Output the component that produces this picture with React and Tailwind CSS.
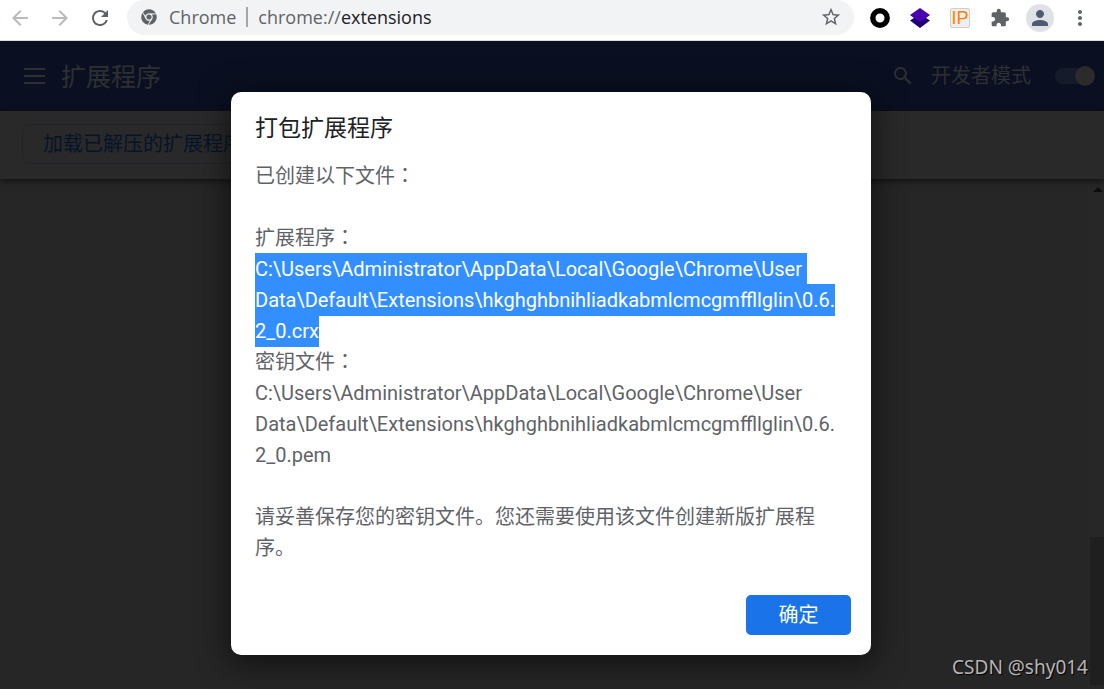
import { useState } from 'react';
import {
  MdArrowBack,
  MdArrowForward,
  MdRefresh,
  MdStarBorder,
  MdExtension,
  MdPerson,
  MdMoreVert,
  MdSearch,
} from 'react-icons/md';
import { FaChrome } from 'react-icons/fa';

const BASE_PATH = 'C:\\Users\\Administrator\\AppData\\Local\\Google\\Chrome\\User Data\\Default\\Extensions\\hkghghbnihliadkabmlcmcgmffllglin\\0.6.2_0';

function BrowserBar() {
  const [url, setUrl] = useState('extensions');

  return (
    <header className="flex h-[41px] items-start border-b border-[#dadce0] bg-white pr-[14px] pl-2 font-['Open_Sans','Noto_Sans_CJK_SC',sans-serif] text-[#5f6368]">
      <nav className="flex h-[35px] items-center gap-4">
        <button aria-label="Back" className="text-[#b8babd]">
          <MdArrowBack className="size-6" />
        </button>
        <button aria-label="Forward" className="text-[#b8babd]">
          <MdArrowForward className="size-6" />
        </button>
        <button aria-label="Reload">
          <MdRefresh className="size-6" />
        </button>
      </nav>

      <div className="ml-[15px] flex h-[35px] min-w-0 flex-1 items-center rounded-full bg-[#f1f3f4] pr-3 pb-0.5 pl-[14px] text-lg">
        <FaChrome className="size-4 shrink-0" />
        <span className="ml-3">Chrome</span>
        <span className="mx-[10px] h-5 w-0.5 shrink-0 bg-[#a3a7ab]" />
        <label htmlFor="url">chrome://</label>
        <input
          id="url"
          value={url}
          onChange={(e) => setUrl(e.target.value)}
          className="min-w-0 flex-1 bg-transparent text-[#202124] outline-none"
        />
        <button aria-label="Bookmark this tab">
          <MdStarBorder className="size-[22px]" />
        </button>
      </div>

      <div className="ml-4 flex h-[35px] items-center gap-5">
        <button aria-label="Recorder">
          <svg viewBox="0 0 20 20" className="size-5">
            <circle cx="10" cy="10" r="7.2" fill="none" stroke="#000" strokeWidth="5.4" />
          </svg>
        </button>
        <button aria-label="Layers">
          <svg viewBox="0 0 20 20" className="size-5">
            <path d="M0 12.5 10 6l10 6.5L10 20z" fill="#1c0073" />
            <path d="M0 7 10 0l10 7L10 14.500z" fill="#4a00b0" />
          </svg>
        </button>
        <button
          aria-label="IP lookup"
          className="grid size-5 place-items-center rounded-xs border border-[#cfcfcf] bg-[#efefef] font-['Liberation_Sans',sans-serif] text-lg leading-4 text-[#ff8000]"
        >
          IP
        </button>
        <button aria-label="Extensions">
          <MdExtension className="size-5" />
        </button>
        <button aria-label="Profile" className="-mx-1 grid size-7 place-items-center rounded-full bg-[#dee1e6] text-[#4d5b70]">
          <MdPerson className="size-6" />
        </button>
        <button aria-label="Menu" className="-mx-0.5">
          <MdMoreVert className="size-6" />
        </button>
      </div>
    </header>
  );
}

function ExtensionsPage() {
  const [devMode, setDevMode] = useState(true);

  return (
    <div className="flex flex-1 flex-col bg-[#262626]">
      <div className="flex h-[70px] items-center bg-[#0a1021] pr-[9px] pl-6 text-[#2e2f31]">
        <button aria-label="Main menu">
          <svg viewBox="0 0 21 16" className="h-4 w-[21px]" fill="currentColor">
            <path d="M0 0h21v2H0zM0 7h21v2H0zM0 14h21v2H0z" />
          </svg>
        </button>
        <h1 className="ml-4 pt-1 text-[25px]">扩展程序</h1>
        <button aria-label="Search" className="ml-auto">
          <MdSearch className="size-6" />
        </button>
        <label className="ml-4 flex items-center gap-6 text-xl">
          开发者模式
          <span className="relative flex h-5 w-10 items-center">
            <input
              type="checkbox"
              checked={devMode}
              onChange={(e) => setDevMode(e.target.checked)}
              className="peer h-4 w-9 appearance-none rounded-full bg-[#151b2a]"
            />
            <span className="pointer-events-none absolute left-0 size-5 rounded-full bg-[#2b2b2b] shadow peer-checked:left-5" />
          </span>
        </label>
      </div>

      <div className="z-10 flex h-[68px] items-center bg-[#292929] px-[22px] pb-0.5 shadow-[0_2px_6px_#111]">
        <button className="h-10 rounded-md border border-[#222326] px-5 text-xl whitespace-nowrap text-[#061429]">
          加载已解压的扩展程序
        </button>
      </div>

      <div className="flex flex-1 justify-end">
        <div className="flex w-4 flex-col items-end bg-[#272727] pt-2 pb-1">
          <span className="mr-px h-0 w-0 border-x-5 border-b-5 border-x-transparent border-b-[#0c0c0c]" />
          <span className="mt-auto h-[148px] w-[14px] bg-[#1f1f1f]" />
        </div>
      </div>
    </div>
  );
}

// full-width colon, centred in its cell
function Colon() {
  return <span lang="zh-TW" className="font-['Noto_Sans_CJK_TC',sans-serif] leading-none">：</span>;
}

function PackDialog() {
  return (
    <div
      role="dialog"
      aria-labelledby="dialog-title"
      className="w-[640px] rounded-[10px] bg-white pt-[19px] pr-5 pb-5 pl-6 shadow-[0_6px_30px_4px_rgba(0,0,0,0.5)]"
    >
      <h2 id="dialog-title" className="text-[23px] leading-9 text-[#202124]">打包扩展程序</h2>

      <div className="mt-[14px] mr-2 text-xl leading-[31px] wrap-break-word whitespace-pre-wrap text-[#5f6368]">
        <p className="mb-[31px]">已创建以下文件<Colon /></p>
        <p>扩展程序<Colon /></p>
        <p>
          <span className="bg-[#338fff] py-1 text-white">{`${BASE_PATH}.crx`}</span>
        </p>
        <p>密钥文件<Colon /></p>
        <p>{`${BASE_PATH}.pem`}</p>
        <p className="mt-[31px]">请妥善保存您的密钥文件。您还需要使用该文件创建新版扩展程序。</p>
      </div>

      <div className="mt-[31px] flex justify-end">
        <button className="h-10 w-[105px] rounded-[5px] bg-[#1a73e8] text-xl text-white">确定</button>
      </div>
    </div>
  );
}

export default function App() {
  return (
    <div className="flex min-h-screen flex-col font-[Roboto,'Noto_Sans_CJK_SC',sans-serif]" lang="zh-CN">
      <BrowserBar />
      <div className="relative flex flex-1 flex-col">
        <ExtensionsPage />
        <div className="absolute inset-0 z-20 flex items-start justify-center pt-[51px] pr-0.5">
          <PackDialog />
        </div>
        <p className="absolute right-4 bottom-2 z-30 font-['Noto_Sans',sans-serif] text-[19px] text-[#b5b5b5] [text-shadow:1px_1px_1px_#000]">
          CSDN @shy014
        </p>
      </div>
    </div>
  );
}
